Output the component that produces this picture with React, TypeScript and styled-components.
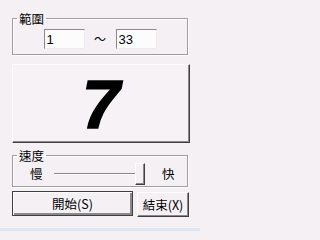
import React from "react";
import styled, { createGlobalStyle } from "styled-components";

const GlobalStyle = createGlobalStyle`
  html, body {
    margin: 0;
    padding: 0;
    background: #f4f0f4;
  }
  #root {
    width: 200px;
    height: 231px;
  }
`;

const cjk = `"Noto Sans CJK TC", "Noto Sans CJK JP", "Liberation Sans", sans-serif`;

const Window = styled.div`
  width: 200px;
  height: 231px;
  display: flex;
  flex-direction: column;
  background: #f4f0f4;
  font-family: ${cjk};
  font-size: 12px;
  color: #000;
  overflow: hidden;
`;

const Body = styled.div`
  flex: 1;
  display: flex;
  flex-direction: column;
  padding-left: 12px;
`;

const Group = styled.fieldset<{ $top: number }>`
  box-sizing: border-box;
  width: 176px;
  margin: ${(p) => p.$top}px 0 0;
  padding: 0;
  min-width: 0;
  border: 1px solid #a09ca0;
  box-shadow: inset 1px 1px 0 #fff, 1px 1px 0 #fff;
`;

const Legend = styled.legend`
  margin-left: 4px;
  padding: 0 2px;
  font-size: 12.5px;
  line-height: 13px;
  height: 13px;
`;

const RangeRow = styled.div`
  display: flex;
  justify-content: center;
  align-items: center;
  padding: 4px 0 5px;
`;

const NumberBox = styled.input`
  box-sizing: border-box;
  width: 41px;
  height: 20px;
  margin: 0;
  padding: 0 0 0 2px;
  border-style: solid;
  border-width: 1px;
  border-color: #8c888c #eeeaee #eeeaee #8c888c;
  background: #fcfcfc;
  font-family: "Liberation Sans", Arial, sans-serif;
  font-size: 13px;
  color: #000;
  outline: none;
`;

const Tilde = styled.span`
  width: 31px;
  text-align: center;
  font-size: 12px;
  line-height: 20px;
`;

const NumberButton = styled.button`
  box-sizing: border-box;
  width: 178px;
  height: 79px;
  margin: 9px 0 0;
  padding: 0;
  display: flex;
  align-items: center;
  justify-content: center;
  background: #f6f2f6;
  border-style: solid;
  border-width: 1px;
  border-color: #fff #404040 #404040 #fff;
  box-shadow: inset -1px -1px 0 #8c888c;
  font-family: "Liberation Sans", Arial, sans-serif;
  font-weight: bold;
  font-style: italic;
  font-size: 68px;
  line-height: 1;
  color: #000;
  -webkit-text-stroke: 1.5px #000;
`;

const SpeedRow = styled.div`
  display: flex;
  align-items: center;
  height: 22px;
  padding: 1px 0 1px 17px;
`;

const SpeedLabel = styled.span<{ $before?: number; $after?: number }>`
  width: 12px;
  margin-left: ${(p) => p.$before ?? 0}px;
  margin-right: ${(p) => p.$after ?? 0}px;
  font-size: 12.5px;
  line-height: 14px;
`;

const Slider = styled.div`
  width: 91px;
  height: 22px;
  display: flex;
  align-items: center;
`;

const Track = styled.div`
  flex: 1;
  height: 0;
  border-top: 1px solid #8c888c;
  border-bottom: 1px solid #fff;
`;

const Thumb = styled.div`
  box-sizing: border-box;
  width: 10px;
  height: 22px;
  background: #f4f0f4;
  border-style: solid;
  border-width: 1px;
  border-color: #fff #404040 #404040 #fff;
  box-shadow: inset -1px -1px 0 #8c888c;
`;

const ButtonRow = styled.div`
  display: flex;
  align-items: flex-start;
  gap: 4px;
  margin-top: 4px;
`;

const PushButton = styled.button<{ $width: number; $default?: boolean }>`
  box-sizing: border-box;
  width: ${(p) => p.$width}px;
  height: 25px;
  margin: ${(p) => (p.$default ? 0 : 1)}px 0 0;
  padding: 0;
  background: #f4f0f4;
  border-style: solid;
  border-width: 1px;
  border-color: ${(p) =>
    p.$default ? "#404040" : "#fff #404040 #404040 #fff"};
  box-shadow: ${(p) =>
    p.$default
      ? "inset 1px 1px 0 #fff, inset -1px -1px 0 #8c888c, inset -2px -2px 0 #8c888c"
      : "inset -1px -1px 0 #8c888c"};
  font-family: ${cjk};
  font-size: 12.5px;
  color: #000;
`;

const StatusStrip = styled.div`
  height: 3px;
  background: #dce6f4;
`;

export default function App() {
  return (
    <>
      <GlobalStyle />
      <Window>
        <Body>
          <Group $top={12}>
            <Legend>範圍</Legend>
            <RangeRow>
              <NumberBox defaultValue="1" readOnly />
              <Tilde>～</Tilde>
              <NumberBox defaultValue="33" readOnly />
            </RangeRow>
          </Group>
          <NumberButton>7</NumberButton>
          <Group $top={6}>
            <Legend>速度</Legend>
            <SpeedRow>
              <SpeedLabel $after={12}>慢</SpeedLabel>
              <Slider>
                <Track />
                <Thumb />
              </Slider>
              <SpeedLabel $before={17}>快</SpeedLabel>
            </SpeedRow>
          </Group>
          <ButtonRow>
            <PushButton $width={121} $default>
              開始(S)
            </PushButton>
            <PushButton $width={52}>結束(X)</PushButton>
          </ButtonRow>
        </Body>
        <StatusStrip />
      </Window>
    </>
  );
}
